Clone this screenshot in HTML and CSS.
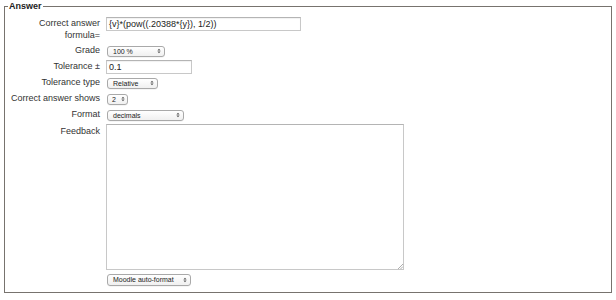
FILE: index.html
```html
<!DOCTYPE html>
<html>
<head>
<meta charset="utf-8">
<link rel="stylesheet" href="styles.css">
</head>
<body>
<fieldset class="answer">
  <legend>Answer</legend>
  <div class="row row-tall">
    <label class="lbl">Correct answer formula=</label>
    <div class="field"><span class="text-input wide">{v}*(pow((.20388*{y}), 1/2))</span></div>
  </div>
  <div class="row">
    <label class="lbl">Grade</label>
    <div class="field"><span class="sel w-grade"><span class="sel-text">100 %</span><svg class="arr" width="5" height="7" viewBox="0 0 5 7"><path d="M0.5 3 L2.5 0.8 L4.5 3 Z M0.5 4 L2.5 6.2 L4.5 4 Z" fill="#555"/></svg></span></div>
  </div>
  <div class="row">
    <label class="lbl">Tolerance ±</label>
    <div class="field"><span class="text-input short">0.1</span></div>
  </div>
  <div class="row">
    <label class="lbl">Tolerance type</label>
    <div class="field"><span class="sel w-type"><span class="sel-text">Relative</span><svg class="arr" width="5" height="7" viewBox="0 0 5 7"><path d="M0.5 3 L2.5 0.8 L4.5 3 Z M0.5 4 L2.5 6.2 L4.5 4 Z" fill="#555"/></svg></span></div>
  </div>
  <div class="row">
    <label class="lbl nowrap">Correct answer shows</label>
    <div class="field"><span class="sel w-shows"><span class="sel-text">2</span><svg class="arr" width="5" height="7" viewBox="0 0 5 7"><path d="M0.5 3 L2.5 0.8 L4.5 3 Z M0.5 4 L2.5 6.2 L4.5 4 Z" fill="#555"/></svg></span></div>
  </div>
  <div class="row">
    <label class="lbl">Format</label>
    <div class="field"><span class="sel w-format"><span class="sel-text">decimals</span><svg class="arr" width="5" height="7" viewBox="0 0 5 7"><path d="M0.5 3 L2.5 0.8 L4.5 3 Z M0.5 4 L2.5 6.2 L4.5 4 Z" fill="#555"/></svg></span></div>
  </div>
  <div class="row row-feedback">
    <label class="lbl lbl-top">Feedback</label>
    <div class="field field-col">
      <div class="textarea"><svg class="grip" width="6" height="6" viewBox="0 0 6 6"><path d="M1 6 L6 1 M3.5 6 L6 3.5" stroke="#999" stroke-width="0.8"/></svg></div>
      <span class="sel w-moodle"><span class="sel-text">Moodle auto-format</span><svg class="arr" width="5" height="7" viewBox="0 0 5 7"><path d="M0.5 3 L2.5 0.8 L4.5 3 Z M0.5 4 L2.5 6.2 L4.5 4 Z" fill="#555"/></svg></span>
    </div>
  </div>
</fieldset>
</body>
</html>
```

FILE: styles.css
```css
html, body {
  margin: 0;
  padding: 0;
  background: #fff;
}
body {
  font-family: "Liberation Sans", Arial, Helvetica, sans-serif;
  color: #333;
  font-size: 9px;
}
.answer {
  margin: 0 4px;
  padding: 5px 5px 6px 5px;
  border: 1px solid #77736e;
  min-width: 0;
}
.answer legend {
  font-weight: bold;
  font-size: 9px;
  line-height: 12px;
  padding: 0 1px;
  margin-left: -2px;
  color: #222;
}
.row {
  display: grid;
  grid-template-columns: 90px auto;
  column-gap: 6px;
  height: 16px;
  align-items: center;
}
.row-tall {
  height: 26px;
  align-items: start;
}
.row-tall .lbl {
  padding-top: 1px;
}
.lbl {
  text-align: right;
  line-height: 11.5px;
  font-size: 9px;
  color: #333;
}
.nowrap {
  white-space: nowrap;
}
.lbl-top {
  align-self: start;
  padding-top: 3px;
}
.field {
  display: flex;
  align-items: center;
}
.row-tall .field {
  align-items: flex-start;
}
.text-input {
  display: block;
  box-sizing: border-box;
  height: 14px;
  border: 1px solid #c8c8c8;
  border-top-color: #b4b4b4;
  box-shadow: inset 0 1px 1px rgba(0,0,0,0.06);
  padding: 0 2px;
  font-size: 9px;
  line-height: 12px;
  color: #222;
  background: #fff;
}
.wide { width: 195px; }
.short { width: 86px; }
.sel {
  display: flex;
  align-items: center;
  justify-content: space-between;
  box-sizing: border-box;
  height: 11px;
  margin-left: 1px;
  padding: 0 3px 0 5px;
  border: 1px solid #a9a9a9;
  border-radius: 3px;
  background: linear-gradient(#ffffff, #f0f0f0);
  box-shadow: 0 0.5px 0.5px rgba(0,0,0,0.08);
}
.sel-text {
  font-size: 7px;
  line-height: 9px;
  color: #222;
  white-space: nowrap;
}
.arr {
  display: block;
  flex: none;
  width: 4px;
  height: 6px;
}
.w-grade { width: 58px; }
.w-type { width: 51px; }
.w-shows { width: 21px; padding-left: 4px; padding-right: 2px; }
.w-format { width: 77px; }
.w-moodle { width: 84px; height: 12px; margin-top: 4px; }
.row-feedback {
  height: auto;
  align-items: start;
}
.field-col {
  flex-direction: column;
  align-items: flex-start;
  padding-top: 0.5px;
}
.textarea {
  position: relative;
  box-sizing: border-box;
  width: 298px;
  height: 146px;
  border: 1px solid #c8c8c8;
  border-top-color: #b4b4b4;
  background: #fff;
}
.grip {
  position: absolute;
  right: 0;
  bottom: 0;
  width: 6px;
  height: 6px;
}
```
